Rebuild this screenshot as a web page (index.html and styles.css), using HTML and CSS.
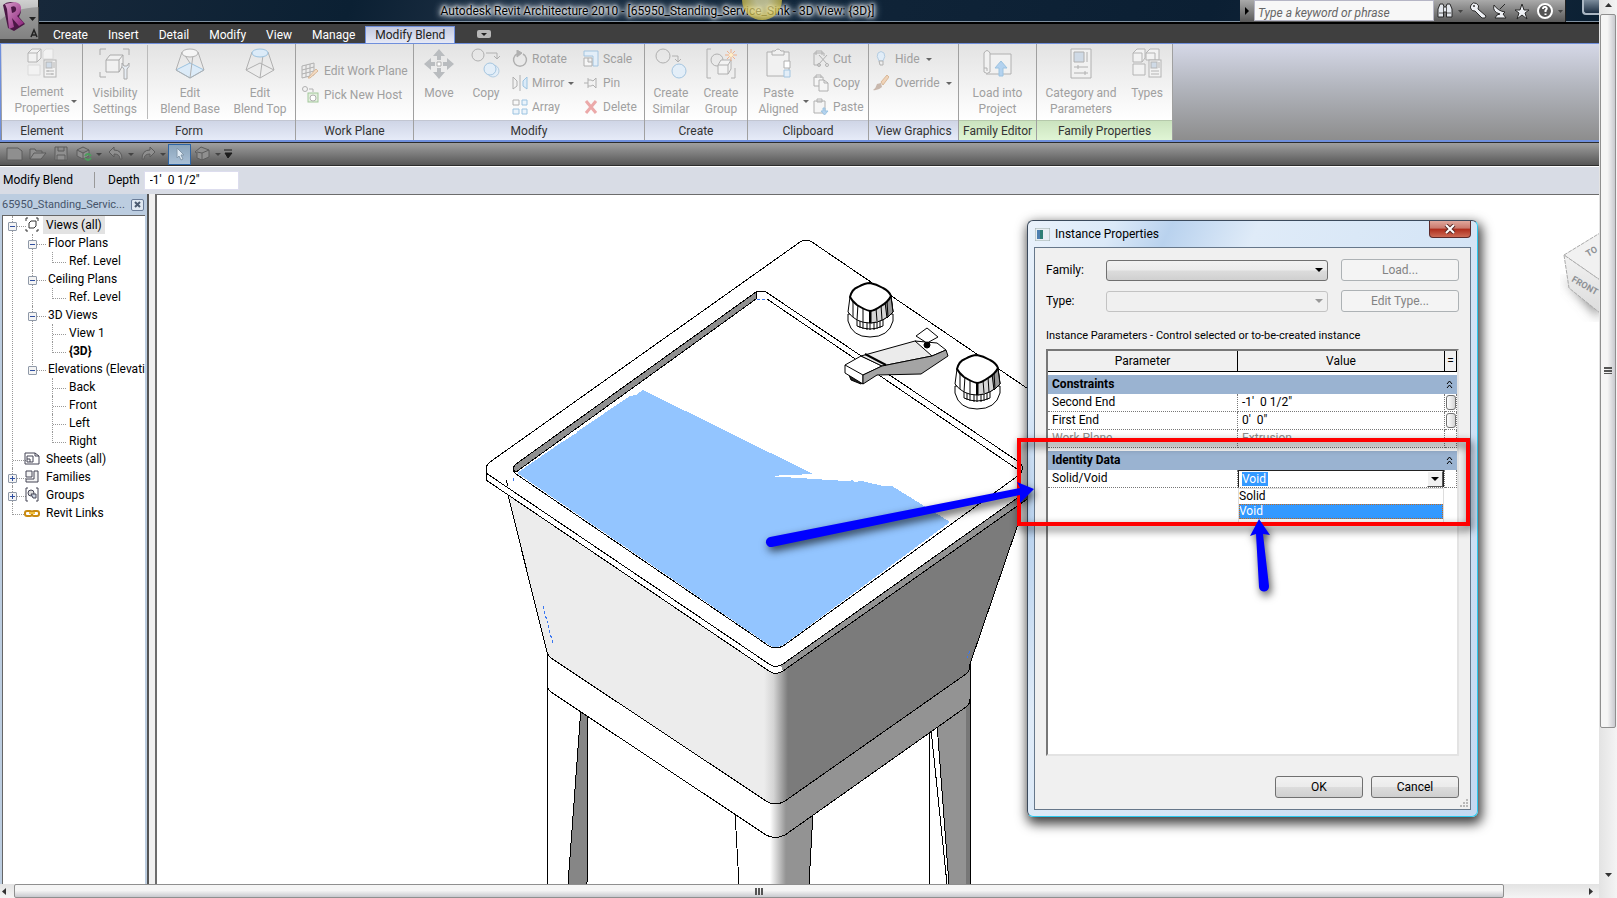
FILE: index.html
```html
<!DOCTYPE html>
<html lang="en">

<head>
    <meta charset="UTF-8">
    <meta name="viewport" content="width=device-width, initial-scale=1.0">
    <title>Autodesk Revit Architecture 2010</title>
    <link rel="stylesheet" href="styles.css">
</head>

<body>
    <div class="screen">
        <header class="top">
            <button class="app-menu" aria-label="Application menu">
                <svg width="39" height="39" viewBox="0 0 39 39">
                    <defs>
                        <linearGradient id="logoR" x1="0" y1="0" x2="1" y2="1">
                            <stop offset="0" stop-color="#d59ac8" />
                            <stop offset="1" stop-color="#8b1d78" />
                        </linearGradient>
                    </defs>
                    <path d="M0 20Q14 8 39 7V39H0z" fill="#777" opacity=".5" />
                    <path d="M3 5L8 28L14 31L25 24L19 17Q24 8 16 3Q8 0 3 5z" fill="#4b1745" />
                    <path d="M5 4L15 2Q22 3 21 10Q20 14 17 16L24 23L19 26L12 18L14 27L9 29L7 9zM11 7L12 13Q17 12 16 8Q15 5 11 7z" fill="url(#logoR)" fill-rule="evenodd" />
                    <path d="M29 17H36L32.500 21z" fill="#222" />
                    <path d="M31 37L34 30L37 37M32 35H36" fill="none" stroke="#222" stroke-width="1.500" />
                </svg>
            </button>

            <div class="titlebar">
                <h1 class="title">Autodesk Revit Architecture 2010 - [65950_Standing_Service_Sink - 3D View: {3D}]</h1>
                <div class="infocenter">
                    <button class="info-btn play" aria-label="Collapse">
                        <svg width="14" height="20" viewBox="0 0 14 20"><path d="M5 7L9 11L5 15z" fill="#000" /></svg>
                    </button>
                    <input class="search" type="text" placeholder="Type a keyword or phrase" aria-label="Search">
                    <button class="info-btn" aria-label="Find">
                        <svg width="34" height="20" viewBox="0 0 34 20"><path d="M4 17V9L6 4H9L10 7H12L13 4H16L18 9V17H12.500V12H9.500V17z" fill="#e4e8ee" stroke="#2a2a2a" /><path d="M5 13H9M13 13H17M9.500 7V12M12.500 7V12" stroke="#555" /><path d="M24 10H29L26.500 13z" fill="#444" /></svg>
                    </button>
                    <button class="info-btn" aria-label="Subscription Center">
                        <svg width="22" height="20" viewBox="0 0 22 20"><path d="M3 5A4 4 0 1 1 10 9L18 16L17 18H14L7 11A4 4 0 0 1 3 5z" fill="#eef0f4" stroke="#2a2a2a" /><circle cx="6" cy="6" r="1" fill="#333" /></svg>
                    </button>
                    <button class="info-btn" aria-label="Communication Center">
                        <svg width="22" height="20" viewBox="0 0 22 20"><path d="M4 5Q2 12 10 14L7 15L5 18H16L13 14L15 12Q8 11 4 5zM10 9L15 4" fill="#eef0f4" stroke="#2a2a2a" /></svg>
                    </button>
                    <button class="info-btn" aria-label="Favorites">
                        <svg width="22" height="20" viewBox="0 0 22 20"><path d="M10 4L12 10H17L13 13L15 19L10 15L5 19L7 13L3 10H8z" fill="#f0f2f6" stroke="#2a2a2a" /></svg>
                    </button>
                    <button class="info-btn" aria-label="Help">
                        <svg width="31" height="20" viewBox="0 0 31 20"><circle cx="11" cy="11" r="7" fill="#555" stroke="#fff" stroke-width="2" /><path d="M9 9Q9 6.500 11.500 7Q14 8 11.500 10.500V12M11.500 13.500V15" fill="none" stroke="#fff" stroke-width="2" /><path d="M24 10H29L26.500 13z" fill="#444" /></svg>
                    </button>
                </div>
                <button class="minimize" aria-label="Minimize"></button>
                <span class="cursor-halo"></span>
            </div>

            <nav class="tabs">
                <a href="#">Create</a>
                <a href="#">Insert</a>
                <a href="#">Detail</a>
                <a href="#">Modify</a>
                <a href="#">View</a>
                <a href="#">Manage</a>
                <a href="#" class="active">Modify Blend</a>
                <button class="tab-toggle" aria-label="Minimize ribbon">
                    <svg width="14" height="8" viewBox="0 0 14 8"><rect width="14" height="8" rx="2" fill="#b8b8b8" /><path d="M4 3H10L7 6z" fill="#222" /></svg>
                </button>
            </nav>
        </header>

        <div class="ribbon">
            <section class="panel element">
                <div class="tools">
                    <button class="tool" disabled>
                        <svg width="32" height="32" viewBox="0 0 32 32" fill="#f2f2f2" stroke="#b4b4b4"><path d="M2 5L6 1H15V10L11 14H2zM2 5H11V14M11 5L15 1" /><path d="M17 4L20 1H27V11H17zM2 17H14V27H2z" stroke="#dadada" /><rect x="18" y="12" width="12" height="17" /><rect x="20" y="14" width="6" height="6" fill="#cfdae6" /><path d="M28 14V20M20 23H28M20 26H28M22 22V24M26 25V27" /></svg>
                        <span>Element<br>Properties</span>
                    </button>
                    <i class="caret"></i>
                </div>
                <h2>Element</h2>
            </section>

            <section class="panel form">
                <div class="tools">
                    <button class="tool" disabled>
                        <svg width="32" height="32" viewBox="0 0 32 32" fill="none" stroke="#aaa"><path d="M1 7V1H7M24 1H30V7M1 24V29H7" /><path d="M7 12L11 7H24V17L20 24H7zM7 12H20V24M20 12L24 7" fill="#f1f1f1" /><path d="M23 15Q22 19 25 21V31H28V21Q31 19 30 15L28 18H25z" fill="#e7edf4" /></svg>
                        <span>Visibility<br>Settings</span>
                    </button>
                    <i class="divider"></i>
                    <button class="tool" disabled>
                        <svg width="32" height="32" viewBox="0 0 32 32" fill="none" stroke="#b0b0b0"><path d="M2 22L16 15L30 22L16 30z" fill="#dcebf8" stroke="#9cc3e0" /><path d="M8 4L2 22L16 30L30 22L24 4M19 7L16 30M10 6L16 15" /><ellipse cx="16" cy="5" rx="8" ry="4" fill="#f5f5f5" /></svg>
                        <span>Edit<br>Blend Base</span>
                    </button>
                    <button class="tool" disabled>
                        <svg width="32" height="32" viewBox="0 0 32 32" fill="none" stroke="#b0b0b0"><path d="M8 4L2 22L16 30L30 22L24 4M19 7L16 30M2 22L16 15L30 22" /><ellipse cx="16" cy="5" rx="8" ry="4" fill="#dcebf8" stroke="#9cc3e0" /></svg>
                        <span>Edit<br>Blend Top</span>
                    </button>
                </div>
                <h2>Form</h2>
            </section>

            <section class="panel workplane">
                <div class="tools">
                    <div class="stack">
                        <button class="mini" disabled>
                            <svg width="18" height="18" viewBox="0 0 18 18" fill="none" stroke="#b0b0b0"><path d="M1 4L13 1V13L1 16zM5 3V15M9 2V14M1 8L13 5M1 12L13 9" /><path d="M7 16L15 7L17 9L9 16z" fill="#f5dcc4" stroke="#d8b898" /></svg>
                            Edit Work Plane
                        </button>
                        <button class="mini" disabled>
                            <svg width="18" height="18" viewBox="0 0 18 18" fill="none" stroke="#b0b0b0"><circle cx="4" cy="3" r="2.500" /><path d="M8 3H12V6" /><rect x="7" y="7" width="10" height="9" fill="#e3f0de" stroke="#a3c79c" /><circle cx="12" cy="12" r="3" fill="#fff" /></svg>
                            Pick New Host
                        </button>
                    </div>
                </div>
                <h2>Work Plane</h2>
            </section>

            <section class="panel modify">
                <div class="tools">
                    <button class="tool" disabled>
                        <svg width="32" height="32" viewBox="0 0 32 32" fill="#b9bcbf"><path d="M16 1L22 8H18V12H14V8H10zM16 31L22 24H18V20H14V24H10zM1 16L8 10V14H12V18H8V22zM31 16L24 10V14H20V18H24V22z" /><path d="M14 14H18V18H14z" fill="#fff" stroke="#b0b0b0" /></svg>
                        <span>Move</span>
                    </button>
                    <button class="tool" disabled>
                        <svg width="32" height="32" viewBox="0 0 32 32" fill="none" stroke="#b0b0b0"><circle cx="8" cy="7" r="6" /><path d="M16 5H27V11M24 8L27 11L30 8" /><circle cx="23" cy="23" r="6" fill="#e3eef8" stroke="#b5cde2" /><circle cx="20" cy="21" r="6" fill="#e3eef8" stroke="#a4c5e0" /></svg>
                        <span>Copy</span>
                    </button>
                    <div class="stack">
                        <button class="mini" disabled>
                            <svg width="16" height="18" viewBox="0 0 16 18" fill="none" stroke="#b0b0b0"><path d="M5 4A6.500 6.500 0 1 0 11 4" stroke-width="1.500" /><path d="M5 0L10 3L5 7z" fill="#b0b0b0" /></svg>
                            Rotate
                        </button>
                        <button class="mini" disabled>
                            <svg width="16" height="18" viewBox="0 0 16 18" fill="none" stroke="#b0b0b0"><path d="M1 3L5 7V12L1 15zM8 1V17" /><path d="M15 3L11 7V12L15 15z" fill="#dcebf8" stroke="#9cc3e0" /></svg>
                            Mirror <i class="caret"></i>
                        </button>
                        <button class="mini" disabled>
                            <svg width="16" height="18" viewBox="0 0 16 18" fill="none" stroke="#9cc3e0"><path d="M1 2H7V7H1z" stroke="#b0b0b0" /><path d="M10 2H15V7H10zM1 11H7V16H1zM10 11H15V16H10z" fill="#eaf3fb" /></svg>
                            Array
                        </button>
                    </div>
                    <div class="stack">
                        <button class="mini" disabled>
                            <svg width="16" height="18" viewBox="0 0 16 18" fill="#e3eef8" stroke="#a4c5e0"><path d="M1 1H15V16H10V6H1z" /><path d="M1 8H9V16H1zM5 8V12H9" fill="#f6f6f6" stroke="#b0b0b0" /></svg>
                            Scale
                        </button>
                        <button class="mini" disabled>
                            <svg width="16" height="18" viewBox="0 0 16 18" fill="none" stroke="#b0b0b0"><path d="M1 9H5M5 4V14M5 6H8L10 7L13 4V14L10 11L8 12H5" /></svg>
                            Pin
                        </button>
                        <button class="mini" disabled>
                            <svg width="16" height="18" viewBox="0 0 16 18" stroke="#eba9a9" stroke-width="3"><path d="M3 3L13 15M13 3L3 15" /></svg>
                            Delete
                        </button>
                    </div>
                </div>
                <h2>Modify</h2>
            </section>

            <section class="panel create">
                <div class="tools">
                    <button class="tool" disabled>
                        <svg width="32" height="32" viewBox="0 0 32 32" fill="none" stroke="#b0b0b0"><circle cx="8" cy="8" r="7" /><path d="M17 8H23V14M20 11L23 14L26 11" /><circle cx="24" cy="23" r="7" fill="#e3eef8" stroke="#a4c5e0" /></svg>
                        <span>Create<br>Similar</span>
                    </button>
                    <button class="tool" disabled>
                        <svg width="32" height="32" viewBox="0 0 32 32" fill="none" stroke="#b0b0b0"><path d="M6 1H2V30H6M26 30H30V20" /><circle cx="12" cy="12" r="6" /><path d="M13 17L16 12H26V21L23 26H13zM13 17H23V26M23 17L26 12" fill="#f3f3f3" /><path d="M26 1V13M20 7H32M22 3L30 11M30 3L22 11" stroke="#efb18c" /><circle cx="26" cy="7" r="2" fill="#fff0c8" stroke="none" /></svg>
                        <span>Create<br>Group</span>
                    </button>
                </div>
                <h2>Create</h2>
            </section>

            <section class="panel clipboard">
                <div class="tools">
                    <button class="tool" disabled>
                        <svg width="32" height="32" viewBox="0 0 32 32" fill="#f1f1f1" stroke="#b0b0b0"><path d="M4 4H26V28H4z" /><path d="M9 7V3H12Q15 -1 18 3H21V7z" /><path d="M21 13H27V20H21z" fill="#fff" /><path d="M21 22H27V29H21z" fill="#e3eef8" stroke="#a4c5e0" /></svg>
                        <span>Paste<br>Aligned</span>
                    </button>
                    <i class="caret"></i>
                    <div class="stack">
                        <button class="mini" disabled>
                            <svg width="16" height="18" viewBox="0 0 16 18" fill="none" stroke="#b0b0b0"><path d="M7 15H1V3H11V6M3 5V1H9V5M6 5L14 14M14 5L6 14" /><circle cx="6" cy="15" r="1.500" /><circle cx="14" cy="15" r="1.500" /></svg>
                            Cut
                        </button>
                        <button class="mini" disabled>
                            <svg width="16" height="18" viewBox="0 0 16 18" fill="#f5f5f5" stroke="#b0b0b0"><path d="M1 12V3H10V12zM3 4V1H8V4" /><path d="M6 6H11L15 9V17H6zM11 6V9H15" /></svg>
                            Copy
                        </button>
                        <button class="mini" disabled>
                            <svg width="16" height="18" viewBox="0 0 16 18" fill="#f5f5f5" stroke="#b0b0b0"><path d="M1 3H12V15H1zM4 4V1H9V4z" /><path d="M12 10V13H15L11.500 17L8 13H10V10z" fill="#b3d2ef" stroke="#9cc3e0" /></svg>
                            Paste
                        </button>
                    </div>
                </div>
                <h2>Clipboard</h2>
            </section>

            <section class="panel graphics">
                <div class="tools">
                    <div class="stack">
                        <button class="mini" disabled>
                            <svg width="16" height="18" viewBox="0 0 16 18" fill="#e1edf8" stroke="#b5cde2"><path d="M6 11Q3 6 5 3Q8 0 11 3Q13 6 10 11z" /><path d="M6 11H10V15H7z" fill="#eee" stroke="#b0b0b0" /></svg>
                            Hide <i class="caret"></i>
                        </button>
                        <button class="mini" disabled>
                            <svg width="16" height="18" viewBox="0 0 16 18"><path d="M0 16Q3 14 4 10L8 9L9 13Q5 17 0 16z" fill="#c9b8ad" /><path d="M8 8L14 1L16 3L10 11z" fill="#f0d3b8" stroke="#d8b898" /></svg>
                            Override <i class="caret"></i>
                        </button>
                    </div>
                </div>
                <h2>View Graphics</h2>
            </section>

            <section class="panel editor family">
                <div class="tools">
                    <button class="tool" disabled>
                        <svg width="32" height="32" viewBox="0 0 32 32" fill="#f1f1f1" stroke="#b0b0b0"><path d="M8 6H29V26H4" /><path d="M2 20V5Q5 0 8 5V24Q5 27 2 24V20H5V23" /><path d="M19 13L25 20H21V28H17V20H13z" fill="#b3d2ef" stroke="#9cc3e0" /></svg>
                        <span>Load into<br>Project</span>
                    </button>
                </div>
                <h2>Family Editor</h2>
            </section>

            <section class="panel properties family">
                <div class="tools">
                    <button class="tool" disabled>
                        <svg width="32" height="32" viewBox="0 0 32 32" fill="#f1f1f1" stroke="#b0b0b0"><path d="M6 1H26V30H6z" /><path d="M9 4H19V14H9z" fill="#cfdae6" /><path d="M22 4V14M9 19H23M9 25H23M13 17V21M20 23V27" /></svg>
                        <span>Category and<br>Parameters</span>
                    </button>
                    <button class="tool" disabled>
                        <svg width="32" height="32" viewBox="0 0 32 32" fill="#f2f2f2" stroke="#b4b4b4"><path d="M2 5L6 1H14V10L11 14H2zM2 5H11V14M15 5L19 1H28V12H15zM15 5H24V12M2 16H14V27H2z" /><rect x="18" y="12" width="12" height="17" /><rect x="20" y="14" width="6" height="6" fill="#cfdae6" /><path d="M28 14V20M20 23H28M20 26H28" /></svg>
                        <span>Types</span>
                    </button>
                </div>
                <h2>Family Properties</h2>
            </section>
        </div>

        <div class="quick-access">
            <button aria-label="New"><svg width="18" height="16" viewBox="0 0 18 16"><path d="M1 2H12L16 5V14H1z" /></svg></button>
            <button aria-label="Open"><svg width="18" height="16" viewBox="0 0 18 16"><path d="M1 13V3H6L7 5H13V7M1 13L5 7H17L12 13z" /></svg></button>
            <button aria-label="Save"><svg width="18" height="16" viewBox="0 0 18 16"><path d="M3 1H15V14H3zM6 1V5H12V1M5 14V9H13V14" /></svg></button>
            <button aria-label="Synchronize"><svg width="18" height="16" viewBox="0 0 18 16"><path d="M2 4L8 1L14 4V10L8 13L2 10zM2 4L8 7L14 4M8 7V13" /><path d="M10 10Q13 6 16 10M16 12Q13 16 10 12" stroke="#4c9c5c" fill="none" stroke-width="2" /></svg></button>
            <i class="caret"></i>
            <button aria-label="Undo"><svg width="18" height="16" viewBox="0 0 18 16"><path d="M2 6L7 1V4Q15 4 15 13H13Q13 8 7 8V11z" /></svg></button>
            <i class="caret"></i>
            <button aria-label="Redo"><svg width="18" height="16" viewBox="0 0 18 16"><path d="M16 6L11 1V4Q3 4 3 13H5Q5 8 11 8V11z" /></svg></button>
            <i class="caret"></i>
            <button class="on" aria-label="Select"><svg width="18" height="16" viewBox="0 0 18 16"><path d="M6 2V12L8 10L10 14L12 13L10 9H13z" fill="#dfeaf4" stroke="#8498aa" /></svg></button>
            <button aria-label="3D view"><svg width="18" height="16" viewBox="0 0 18 16"><path d="M1 6L7 1L15 4V11L8 14L3 12V7zM8 7L15 4M8 7V14M3 6L8 7" /></svg></button>
            <i class="caret"></i>
            <svg width="10" height="10" viewBox="0 0 10 10"><path d="M1 1H9M2 4H9L5 9z" fill="#1c1c1c" stroke="#1c1c1c" /></svg>
        </div>

        <div class="options">
            <span class="mode">Modify Blend</span>
            <label for="depth">Depth</label>
            <input type="text" id="depth" value="-1'  0 1/2&quot;">
        </div>

        <div class="workspace">
            <aside class="browser">
                <div class="browser-head">
                    <span>65950_Standing_Servic...</span>
                    <button class="close-pane" aria-label="Close">
                        <svg width="7" height="7" viewBox="0 0 7 7" stroke="#4a5a70" stroke-width="2"><path d="M1 1L6 6M6 1L1 6" /></svg>
                    </button>
                </div>
                <ul class="tree">
                    <li>
                        <div class="row"><button class="toggle" aria-label="Collapse"></button>
                            <svg width="16" height="16" viewBox="0 0 16 16" fill="none" stroke="#333"><path d="M4 1H2V4M12 1H14V4M2 12V14H4M14 12V14H12M5 6L7 4H12V9L10 11H5z" /></svg>
                            <span class="selected">Views (all)</span></div>
                        <ul>
                            <li>
                                <div class="row"><button class="toggle" aria-label="Collapse"></button>Floor Plans</div>
                                <ul>
                                    <li><div class="row">Ref. Level</div></li>
                                </ul>
                            </li>
                            <li>
                                <div class="row"><button class="toggle" aria-label="Collapse"></button>Ceiling Plans</div>
                                <ul>
                                    <li><div class="row">Ref. Level</div></li>
                                </ul>
                            </li>
                            <li>
                                <div class="row"><button class="toggle" aria-label="Collapse"></button>3D Views</div>
                                <ul>
                                    <li><div class="row">View 1</div></li>
                                    <li><div class="row"><b>{3D}</b></div></li>
                                </ul>
                            </li>
                            <li>
                                <div class="row"><button class="toggle" aria-label="Collapse"></button>Elevations (Elevati</div>
                                <ul>
                                    <li><div class="row">Back</div></li>
                                    <li><div class="row">Front</div></li>
                                    <li><div class="row">Left</div></li>
                                    <li><div class="row">Right</div></li>
                                </ul>
                            </li>
                        </ul>
                    </li>
                    <li>
                        <div class="row leaf">
                            <svg width="16" height="16" viewBox="0 0 16 16" fill="none" stroke="#445"><path d="M1 2H11L15 5V13H1zM11 2V5H15M3 5H9V11H3zM3 8H6V11" /></svg>
                            <span>Sheets (all)</span></div>
                    </li>
                    <li>
                        <div class="row"><button class="toggle plus" aria-label="Expand"></button>
                            <svg width="16" height="16" viewBox="0 0 16 16" fill="#f4f4f4" stroke="#445"><path d="M2 2H8V8H2zM10 2H14V13H2V10H10z" /></svg>
                            <span>Families</span></div>
                    </li>
                    <li>
                        <div class="row"><button class="toggle plus" aria-label="Expand"></button>
                            <svg width="16" height="16" viewBox="0 0 16 16" fill="none" stroke="#445"><path d="M4 1H2V14H4M12 1H14V14H12" /><circle cx="7" cy="6" r="3" fill="#ddd" /><path d="M7 7H12V11H9z" fill="#cdd6e2" /></svg>
                            <span>Groups</span></div>
                    </li>
                    <li>
                        <div class="row leaf">
                            <svg width="16" height="16" viewBox="0 0 16 16" fill="none" stroke="#c98a10" stroke-width="2"><rect x="1" y="6" width="7" height="5" rx="2" /><rect x="8" y="6" width="7" height="5" rx="2" /><path d="M5 8H11" stroke="#f0c040" /></svg>
                            <span>Revit Links</span></div>
                    </li>
                </ul>
            </aside>

            <main class="canvas">
                <svg class="scene" width="1443" height="689" viewBox="157 195 1443 689">
                    <defs>
                        <linearGradient id="corner" gradientUnits="userSpaceOnUse" x1="764" y1="0" x2="788" y2="0">
                            <stop offset="0" stop-color="#ececec" />
                            <stop offset=".4" stop-color="#d4d4d4" />
                            <stop offset="1" stop-color="#7b7b7b" />
                        </linearGradient>
                        <linearGradient id="deck" gradientUnits="userSpaceOnUse" x1="770" y1="0" x2="786" y2="0">
                            <stop offset="0" stop-color="#fff" />
                            <stop offset="1" stop-color="#939393" />
                        </linearGradient>
                        <linearGradient id="cube" x1="0" y1="0" x2="0" y2="1">
                            <stop offset="0" stop-color="#f2f2f2" />
                            <stop offset="1" stop-color="#dcdcdc" />
                        </linearGradient>
                        <filter id="soft"><feGaussianBlur stdDeviation="6" /></filter>
                    </defs>

                    <g fill="#fff" stroke="#000" stroke-linejoin="round" shape-rendering="crispEdges">
                        <!-- legs -->
                        <path d="M548 680V884H588V714L570 702z" stroke="none" />
                        <path d="M581 708L568 884H587L588 712z" fill="#868686" />
                        <path d="M547 652V884" />
                        <path d="M735 812L739 884H809L813 812z" fill="url(#deck)" />
                        <path d="M937 724L949 884H970V690z" fill="#939393" />
                        <path d="M966 690H970V884H966z" fill="#777" stroke="none" />
                        <path d="M929 730V884M931 729L947 884M937 724L949 884M970 664V884" fill="none" />
                        <!-- deck -->
                        <path d="M547 652V686Q548 690 551 692L766 835Q775 840 785 835L966 707Q970 704 970 699V664L785 770H766z" fill="url(#deck)" />
                        <!-- bowl -->
                        <path d="M508 495L547 652Q548 656 551 658L766 801Q775 807 785 801L966 674Q970 671 970 664L1017 527V490L775 650z" fill="url(#corner)" />
                        <!-- rim -->
                        <path d="M486 468V480L769 671Q775 676 783 671L1040 490V478L775 655z" fill="#fff" />
                        <path d="M781 665L1040 482V490L783 671z" fill="#939393" stroke="none" />
                        <path d="M486 473L769 664Q775 669 783 664L1040 482M783 671L1040 490" fill="none" />
                        <path d="M486 473V467Q487 465 490 462L800 242Q806 238 812 242L1040 397V482L783 664Q775 669 769 664z" />
                        <!-- basin -->
                        <path d="M513 469Q513 467 516 464L756 292Q761 290 766 292L1019 462Q1026 468 1019 475L786 644Q775 652 766 644L516 474Q513 471 513 469z" />
                        <path d="M513 469Q513 467 516 464L756 292V299L516 472z" fill="#8f8f8f" />
                        <path d="M767 299L1020 471" />
                        <path d="M508 486L506 480" />
                    </g>
                    <g shape-rendering="crispEdges">
                        <path d="M517 473L578 431L630 396L636 395L643 390L813 474L767 476L862 481L883 486H892L950 522L786 643Q775 651 766 643z" fill="#93c5ff" />
                        <path d="M556 446L578 432L572 432zM767 476L812 475L862 482z" fill="#fff" />
                        <path d="M757 299H767M513 478V481M543 606L553 644M970 651L967 658" stroke="#3b77f0" stroke-dasharray="3 2" fill="none" />
                        <path d="M1019 475L786 644Q775 652 766 644L516 474" stroke="#000" fill="none" />
                    </g>

                    <!-- faucet -->
                    <g fill="#fff" stroke="#000" stroke-linejoin="round">
                        <path d="M849 375L851 380L861 384L866 380z" fill="#222" />
                        <path d="M845 365L861 356L882 366L863 375V384L845 373z" />
                        <path d="M861 356L915 341L945 350L932 356L882 366z" fill="#ebebeb" />
                        <path d="M915 341L937 343L946 350L932 356z" />
                        <path d="M863 375L882 366L932 356L946 350L948 356L921 374L877 375L863 384z" fill="#a4a4a4" />
                        <path d="M865 354L886 365" stroke-width="2" />
                        <path d="M916 336L927 328L938 337L927 343z" />
                        <circle cx="927" cy="345" r="3" fill="#000" />
                        <path d="M845 365L863 375" />
                    </g>
                    <!-- knobs -->
                    <g id="knob" fill="#fff" stroke="#000" stroke-linejoin="round">
                        <path d="M848 314V321Q852 337 870 337Q889 337 893 321V314z" />
                        <path d="M857 318V326Q870 332 883 326V318z" />
                        <path d="M860 320V328M863 320V329M867 320V330M870 320V330M874 320V330M877 320V329M880 320V328" />
                        <path d="M850 297L848 312Q856 323 870 323Q884 322 893 312L891 296L870 311z" />
                        <path d="M871 311L891 297L893 312Q884 322 871 323z" fill="#d6d6d6" />
                        <path d="M885 302L891 297L893 312L887 318z" fill="#999" />
                        <path d="M853 300V317M858 304L857 320M863 307V322M870 311V323M876 308L877 321M881 305L882 320M887 301L888 317" fill="none" />
                        <path d="M870 310V323" stroke-width="2" />
                        <path d="M850 297Q852 289 858 287Q865 283 870 283Q876 284 883 288Q889 291 891 296Q888 302 881 306Q874 311 870 311Q865 310 857 305Q852 301 850 297z" stroke-width="2" />
                    </g>
                    <use href="#knob" x="107" y="72" />

                    <!-- view cube -->
                    <path d="M1564 278L1600 318V296z" fill="#777" filter="url(#soft)" />
                    <path d="M1564 255L1600 233V280z" fill="#f1f1f1" stroke="#aaa" stroke-dasharray="4 1" />
                    <path d="M1564 255L1569 288L1600 313V280z" fill="url(#cube)" stroke="#aaa" stroke-dasharray="4 1" />
                    <text class="cube-label" transform="translate(1571 281) rotate(30)">FRONT</text>
                    <text class="cube-label" transform="translate(1588 257) rotate(-30)">TO</text>
                </svg>

                <form class="dialog">
                    <div class="dialog-title">
                        <svg width="15" height="13" viewBox="0 0 15 13"><path d="M0 0H15V13H0z" fill="#e8eef2" stroke="#9aa" /><path d="M2 2H8V11H2z" fill="#2f7f74" /><path d="M2 2H5V11H2z" fill="#4d7fb0" /></svg>
                        <h3>Instance Properties</h3>
                        <button type="button" class="close" aria-label="Close">
                            <svg width="12" height="10" viewBox="0 0 12 10"><path d="M2 1L10 9M10 1L2 9" stroke="#5b2a26" stroke-width="4" /><path d="M2 1L10 9M10 1L2 9" stroke="#fff" stroke-width="2" /></svg>
                        </button>
                    </div>
                    <div class="dialog-body">
                        <div class="field">
                            <label for="family">Family:</label>
                            <select id="family"></select>
                            <button type="button" disabled>Load...</button>
                        </div>
                        <div class="field">
                            <label for="type">Type:</label>
                            <select id="type" disabled></select>
                            <button type="button" disabled>Edit Type...</button>
                        </div>
                        <p class="caption">Instance Parameters - Control selected or to-be-created instance</p>
                        <div class="grid-box">
                            <table>
                                <colgroup>
                                    <col class="col-name">
                                    <col>
                                    <col class="col-eq">
                                </colgroup>
                                <thead>
                                    <tr><th>Parameter</th><th>Value</th><th>=</th></tr>
                                </thead>
                                <tbody>
                                    <tr class="group"><th colspan="2">Constraints</th><td><svg width="7" height="9" viewBox="0 0 7 9" fill="none" stroke="#000"><path d="M1 4L3.500 1L6 4M1 8L3.500 5L6 8" /></svg></td></tr>
                                    <tr><td>Second End</td><td>-1'&nbsp; 0 1/2"</td><td class="eq"><button type="button" aria-label="Associate"></button></td></tr>
                                    <tr><td>First End</td><td>0'&nbsp; 0"</td><td class="eq"><button type="button" aria-label="Associate"></button></td></tr>
                                    <tr class="dim"><td>Work Plane</td><td>Extrusion</td><td></td></tr>
                                </tbody>
                                <tbody>
                                    <tr class="group"><th colspan="2">Identity Data</th><td><svg width="7" height="9" viewBox="0 0 7 9" fill="none" stroke="#000"><path d="M1 4L3.500 1L6 4M1 8L3.500 5L6 8" /></svg></td></tr>
                                    <tr>
                                        <td><label for="solidVoid">Solid/Void</label></td>
                                        <td class="combo">
                                            <div class="combo-box">
                                                <input type="text" id="solidVoid" value="Void">
                                                <button type="button" aria-label="Open list"><i class="caret"></i></button>
                                            </div>
                                            <ul class="combo-list">
                                                <li>Solid</li>
                                                <li class="current">Void</li>
                                            </ul>
                                        </td>
                                        <td></td>
                                    </tr>
                                </tbody>
                            </table>
                        </div>
                        <div class="dialog-actions">
                            <button type="submit">OK</button>
                            <button type="button">Cancel</button>
                        </div>
                        <svg class="grip" width="8" height="8" viewBox="0 0 8 8" fill="#b8b8b8"><path d="M6 0H8V2H6zM3 3H5V5H3zM6 3H8V5H6zM0 6H2V8H0zM3 6H5V8H3zM6 6H8V8H6z" /></svg>
                    </div>
                </form>

                <!-- callouts drawn over the dialog -->
                <svg class="marks" width="1443" height="689" viewBox="157 195 1443 689">
                    <rect x="1019" y="440" width="449" height="84" fill="none" stroke="#f00" stroke-width="4" />
                    <g fill="#00f">
                        <path d="M770 537L1020 488L1017 482L1034 489L1020 503L1020 495L772 547A5 5 0 0 1 770 537z" />
                        <path d="M1259 519L1270 535L1263 534L1269 586A5 5 0 0 1 1259 587L1256 534L1250 536z" />
                    </g>
                </svg>
            </main>
        </div>
    </div>

    <div class="scroll-v">
        <svg width="16" height="14" viewBox="0 0 16 14"><path d="M5 7H12L8.500 3z" fill="#333" /></svg>
        <div class="thumb"><i></i></div>
        <svg width="16" height="16" viewBox="0 0 16 16"><path d="M5 5H12L8.500 9z" fill="#333" /></svg>
    </div>
    <div class="scroll-h">
        <svg width="14" height="14" viewBox="0 0 14 14"><path d="M6 4V11L2 7.500z" fill="#333" /></svg>
        <div class="thumb"><i></i></div>
        <svg width="18" height="14" viewBox="0 0 18 14"><path d="M8 4V11L12 7.500z" fill="#333" /></svg>
    </div>
</body>

</html>
```
FILE: styles.css
```css
* {
    box-sizing: border-box;
}

body {
    margin: 0;
    height: 100vh;
    display: grid;
    grid-template-columns: 1fr 18px;
    grid-template-rows: 1fr 14px;
    overflow: hidden;
    background: #f0f0f0;
    color: #000;
    font-family: Roboto, "Open Sans", sans-serif;
    font-size: 12px;
    line-height: 16px;
}

button,
input,
select {
    font: inherit;
    color: inherit;
    margin: 0;
    padding: 0;
}

button {
    border: 0;
    background: none;
}

h1,
h2,
h3,
p,
ul {
    margin: 0;
    padding: 0;
    font-size: 12px;
    font-weight: normal;
    list-style: none;
}

svg {
    display: block;
    flex: none;
}

.caret {
    display: inline-block;
    border: 3px solid transparent;
    border-top: 3px solid #666;
    border-bottom: 0;
}

.screen {
    min-width: 0;
    min-height: 0;
    display: flex;
    flex-direction: column;
    overflow: hidden;
    background: #d8dce5;
}

/* title bar and tabs */
.top {
    display: grid;
    grid-template-columns: 39px 1fr;
    grid-template-rows: 24px 19px;
    background: #3f3f3f;
}

.app-menu {
    grid-row: 1 / 3;
    height: 39px;
    background: linear-gradient(#d0d0d0, #8a8a8a);
    border-right: 1px solid #222;
}

.titlebar {
    position: relative;
    display: flex;
    overflow: hidden;
    background: linear-gradient(110deg, #17283a 0, #0b2033 20%, #223347 32%, #12263a 40%, #0b1f33 75%, #16283c 90%, #0b2033 100%);
    border-bottom: 2px solid #000;
    box-shadow: inset 0 -1px 0 #7f90a0;
}

.title {
    flex: 1;
    padding: 3px 0 0 36px;
    text-align: center;
    white-space: nowrap;
    text-shadow: 0 0 3px #fff, 0 0 4px #fff, 0 0 6px #dfe6ee, 0 0 8px #c5d0da, 0 0 10px #a9b6c2;
}

.infocenter {
    display: flex;
    height: 22px;
    background: linear-gradient(#aaa, #585858);
    border-right: 1px solid #222;
}

.info-btn {
    display: flex;
}

.search {
    width: 180px;
    height: 21px;
    padding: 4px 3px 0;
    background: #f7f7f7;
    border: 1px solid #b5b5c5;
    font-style: italic;
}

.search::placeholder {
    color: #666;
}

.minimize {
    width: 17px;
    height: 15px;
    margin-left: 16px;
    background: linear-gradient(#7c8c9c, #1c2e42);
    border: 1px solid #aab6c2;
    border-width: 0 0 2px 2px;
    border-radius: 0 0 0 4px;
}

.cursor-halo {
    position: absolute;
    left: 703px;
    top: -20px;
    width: 40px;
    height: 40px;
    border-radius: 50%;
    background: radial-gradient(circle, #fbf3b0 20%, #d9c33c 75%);
    opacity: .7;
}

.tabs {
    display: flex;
    padding-left: 4px;
    color: #fff;
}

.tabs a {
    margin-top: 2px;
    padding: 1px 10px 0;
    color: inherit;
    text-decoration: none;
}

.tabs .active {
    background: linear-gradient(#c3c9df, #e6e9f6);
    border: 1px solid #6f8fdc;
    border-bottom: 0;
    padding: 0 9px;
    color: #222;
}

.tab-toggle {
    margin-left: 22px;
}

/* ribbon */
.ribbon {
    display: flex;
    flex: none;
    height: 99px;
    padding-left: 1px;
    background: linear-gradient(#d5d8e7, #b2b5bd 45%, #8d8d8d);
    border: 1px solid #6f8fdc;
    border-right: 0;
    border-bottom-width: 2px;
}

.panel {
    display: flex;
    flex-direction: column;
    flex: none;
    border-right: 1px solid #a0a0a0;
    color: #a0a0a0;
    white-space: nowrap;
}

.tools {
    flex: 1;
    display: grid;
    position: relative;
    background: linear-gradient(#e3e3e3, #fff);
}

.panel h2 {
    height: 20px;
    padding-top: 2px;
    text-align: center;
    color: #333;
    background: linear-gradient(#cfd5e6, #e6ebf8);
    border-top: 1px solid #c2c6d2;
}

.family h2 {
    background: linear-gradient(#cbe3bf, #e0f5d5);
    border-color: #b5c9ab;
}

.element { width: 81px; }
.form { width: 213px; }
.workplane { width: 118px; }
.modify { width: 231px; }
.create { width: 103px; }
.clipboard { width: 121px; }
.graphics { width: 90px; }
.editor { width: 78px; }
.properties { width: 136px; }

.form .tools { grid-template-columns: 64px 1px 84px 56px; }
.modify .tools { grid-template-columns: 50px 44px 71px 1fr; }
.create .tools { grid-template-columns: 52px 48px; }
.clipboard .tools { grid-template-columns: 61px 1fr; }
.properties .tools { grid-template-columns: 88px 44px; }

.tool {
    display: flex;
    flex-direction: column;
    align-items: center;
    padding-top: 4px;
    line-height: 16px;
    text-align: center;
}

.tool:disabled,
.mini:disabled {
    color: #a0a0a0;
}

.tool span {
    padding-top: 5px;
}

.element .tool span {
    padding-top: 4px;
}

.tools > .caret {
    position: absolute;
    left: 69px;
    top: 56px;
}

.clipboard .tools > .caret {
    left: 55px;
}

.divider {
    background: #bbb;
    margin: 1px 0;
}

.stack {
    display: flex;
    flex-direction: column;
    padding: 3px 0 0 4px;
}

.workplane .stack {
    padding: 15px 0 0 5px;
}

.mini {
    display: flex;
    align-items: center;
    gap: 5px;
    height: 24px;
}

.modify .mini,
.clipboard .mini {
    gap: 4px;
}

.graphics .mini {
    gap: 6px;
}

/* quick access */
.quick-access {
    display: flex;
    flex: none;
    align-items: center;
    height: 24px;
    padding-left: 3px;
    background: linear-gradient(#a0a0a0, #565656);
    border: solid #2c2c2c;
    border-width: 1px 0;
}

.quick-access button {
    display: flex;
    justify-content: center;
    align-items: center;
    width: 23px;
    height: 21px;
}

.quick-access button svg {
    fill: #8f8f8f;
    stroke: #5c5c5c;
}

.quick-access .caret {
    border-top-color: #444;
    margin: 0 2px 0 1px;
}

.quick-access .on {
    background: linear-gradient(#8ba4bb, #a9c0d6);
    border: 1px solid #2d64a4;
}

/* options bar */
.options {
    display: flex;
    flex: none;
    align-items: center;
    height: 28px;
    padding: 0 3px 1px;
    border-top: 1px solid #fff;
}

.mode {
    width: 92px;
    border-right: 1px solid #999;
    margin-right: 13px;
}

.options input {
    width: 95px;
    height: 19px;
    margin-left: 4px;
    padding: 0 5px;
    background: #fff;
    border: 1px solid #dde;
    white-space: pre;
}

/* project browser */
.workspace {
    flex: 1;
    min-height: 0;
    display: flex;
}

.browser {
    flex: none;
    width: 155px;
    display: flex;
    flex-direction: column;
    padding-left: 2px;
    background: linear-gradient(90deg, #bccde0 147px, #555 147px, #555 149px, #f0f0f0 149px);
}

.browser-head {
    display: flex;
    align-items: center;
    height: 21px;
    color: #46546a;
    font-size: 11px;
    white-space: nowrap;
}

.browser-head span {
    width: 129px;
}

.close-pane {
    display: flex;
    align-items: center;
    justify-content: center;
    width: 13px;
    height: 12px;
    border: 1px solid #6a7c98;
    border-radius: 2px;
    background: #dfe8f2;
}

.tree {
    flex: 1;
    width: 143px;
    padding-left: 5px;
    background: #fff;
    border: solid #666;
    border-width: 1px 0 0 1px;
    overflow: hidden;
    white-space: nowrap;
}

.tree ul {
    margin-left: 20px;
}

.tree li {
    position: relative;
}

.tree li::before {
    content: "";
    position: absolute;
    left: 4px;
    top: 0;
    bottom: 0;
    border-left: 1px dotted #999;
}

.tree li:last-child::before {
    bottom: auto;
    height: 11px;
}

.row {
    position: relative;
    display: flex;
    align-items: center;
    height: 18px;
    padding-left: 21px;
}

.row::before {
    content: "";
    position: absolute;
    left: 5px;
    top: 10px;
    width: 13px;
    border-top: 1px dotted #999;
}

.row svg {
    position: relative;
    margin-right: 3px;
}

.row span {
    padding: 1px 3px;
}

.row .selected {
    background: #e2e2e2;
}

.tree > li > .row {
    padding-left: 16px;
}

.toggle {
    position: relative;
    flex: none;
    width: 9px;
    height: 9px;
    margin: 3px 11px 0 -21px;
    border: 1px solid #8f99a8;
    border-radius: 1px;
    background: linear-gradient(#2f4fa0, #2f4fa0) center / 5px 1px no-repeat, #f4f4f4;
}

.toggle.plus {
    background: linear-gradient(#2f4fa0, #2f4fa0) center / 5px 1px no-repeat,
        linear-gradient(#2f4fa0, #2f4fa0) center / 1px 5px no-repeat, #f4f4f4;
}

.tree > li > .row .toggle {
    margin: 3px 7px 0 -16px;
}

/* drawing area */
.canvas {
    flex: 1;
    position: relative;
    overflow: hidden;
    background: #fff;
    border: solid #6c6c6c;
    border-width: 1px 0 0 2px;
}

.marks {
    position: absolute;
    left: 0;
    top: 0;
    pointer-events: none;
    filter: drop-shadow(2px 4px 4px rgba(0, 0, 0, .7));
}

.cube-label {
    font-size: 9px;
    font-weight: bold;
    fill: #8f9296;
}

/* instance properties dialog */
.dialog {
    position: absolute;
    left: 870px;
    top: 25px;
    width: 451px;
    padding: 0 6px 6px;
    background: linear-gradient(115deg, #eaf2fb 0, #dbe9f8 12%, #b9d2ee 20%, #dfebf8 32%, #d5e5f6 60%, #c3d9f2 100%);
    border: 1px solid #3b4a5c;
    border-right-color: #2cc8ee;
    border-bottom-color: #2cc8ee;
    border-radius: 6px;
    box-shadow: 2px 5px 12px 2px rgba(0, 0, 0, .75);
}

.dialog-title {
    display: flex;
    height: 26px;
    padding-left: 1px;
}

.dialog-title > svg {
    margin-top: 7px;
}

.dialog-title h3 {
    flex: 1;
    padding: 5px 0 0 5px;
}

.close {
    display: flex;
    justify-content: center;
    align-items: center;
    width: 42px;
    height: 17px;
    background: linear-gradient(#e0a79c 0, #c9796c 45%, #ae2c1b 50%, #cc6a55);
    border: 1px solid #5c2a2a;
    border-top: 0;
    border-radius: 0 0 4px 4px;
}

.dialog-body {
    position: relative;
    padding: 11px;
    background: #f0f0f0;
    border: 1px solid #66778a;
}

.field {
    position: relative;
    display: grid;
    grid-template-columns: 60px 222px 1fr;
    align-items: center;
    height: 22px;
    margin-bottom: 9px;
}

.field select {
    height: 21px;
    appearance: none;
    background: linear-gradient(#f2f2f2, #ebebeb 48%, #dcdcdc 52%, #d0d0d0);
    border: 1px solid #707070;
    border-radius: 3px;
}

.field::after {
    content: "";
    position: absolute;
    left: 269px;
    top: 9px;
    border: 4px solid transparent;
    border-top-color: #000;
    border-bottom: 0;
}

.field:nth-child(2)::after {
    border-top-color: #999;
}

.field select:disabled {
    background: #f0f0f0;
    border-color: #b0b0b0;
}

.field button,
.dialog-actions button {
    height: 22px;
    background: linear-gradient(#f2f2f2, #ebebeb 48%, #dcdcdc 52%, #cfcfcf);
    border: 1px solid #707070;
    border-radius: 3px;
}

.field button {
    width: 118px;
    justify-self: end;
}

.field button:disabled {
    background: #f4f4f4;
    border-color: #adb2b5;
    color: #838383;
}

.caption {
    margin-top: 16px;
    font-size: 11px;
    white-space: nowrap;
}

.grid-box {
    height: 407px;
    margin-top: 5px;
    background: #fff;
    border: 2px solid #777;
    border-color: #777 #e3e3e3 #e3e3e3 #777;
}

table {
    width: 100%;
    table-layout: fixed;
    border-collapse: separate;
    border-spacing: 0;
}

.col-name {
    width: 190px;
}

.col-eq {
    width: 12px;
}

thead th {
    height: 21px;
    padding: 0;
    background: #f0f0f0;
    border-right: 1px solid #000;
    border-bottom: 1px solid #000;
    font-weight: normal;
}

tbody::before {
    content: "";
    display: table-row;
    height: 3px;
}

tbody td,
.group th {
    height: 18px;
    padding: 0 4px;
    line-height: 17px;
    border-right: 1px dotted #777;
    border-bottom: 1px dotted #777;
    text-align: left;
}

.group th,
.group td {
    height: 19px;
    padding-right: 0;
    background: #9ab3d1;
    border: 0;
}

.group td {
    padding: 0 1px;
}

.dim td {
    color: #8c8c8c;
}

tbody .eq {
    padding: 0 0 0 1px;
}

.eq button {
    display: block;
    width: 10px;
    height: 15px;
    background: linear-gradient(90deg, #fff, #d5d5d5);
    border: 1px solid #707070;
    border-radius: 3px;
}

tbody .combo {
    position: relative;
    padding: 0;
}

.combo-box {
    display: flex;
    align-items: center;
    height: 17px;
    padding-left: 3px;
    background: #fff;
    border: 1px solid #222;
    border-bottom: 0;
}

.combo-box input {
    width: 26px;
    height: 14px;
    margin-right: auto;
    background: #3399ff;
    border: 0;
    color: #fff;
}

.combo-box button {
    display: flex;
    align-items: center;
    justify-content: center;
    width: 16px;
    height: 16px;
    background: #f0f0f0;
    border: 1px solid #555;
    border-color: #fff #555 #555 #fff;
}

.combo-box .caret {
    border-width: 4px 4px 0;
    border-top-color: #000;
}

.combo-list {
    position: absolute;
    left: 0;
    right: 0;
    top: 18px;
    height: 35px;
    background: #fff;
    border: 1px solid #ddd;
    line-height: 15px;
}

.combo-list li {
    height: 15px;
}

.combo-list .current {
    background: #3399ff;
    color: #fff;
    outline: 1px dotted #c96a1a;
    outline-offset: -1px;
}

.dialog-actions {
    display: flex;
    justify-content: flex-end;
    gap: 8px;
    margin-top: 20px;
}

.dialog-actions button {
    width: 88px;
}

.grip {
    position: absolute;
    right: 2px;
    bottom: 2px;
}

/* outer scrollbars */
.scroll-v {
    grid-row: 1 / 3;
    grid-column: 2;
    display: flex;
    flex-direction: column;
    background: linear-gradient(90deg, #e3e3e3, #f4f4f4);
    padding: 0 1px;
}

.scroll-v .thumb {
    height: 79.5%;
    margin-bottom: auto;
    background: linear-gradient(90deg, #f5f5f5 45%, #c8c9ce);
    border: 1px solid #8f8f8f;
    border-radius: 2px;
}

.scroll-v > svg:last-child {
    margin-bottom: 14px;
}

.scroll-h {
    display: flex;
    background: linear-gradient(#e3e3e3, #f4f4f4);
}

.scroll-h .thumb {
    width: 93.2%;
    margin-right: auto;
    background: linear-gradient(#f5f5f5 45%, #c8c9ce);
    border: 1px solid #8f8f8f;
    border-radius: 2px;
}

.thumb {
    display: flex;
    align-items: center;
    justify-content: center;
}

.thumb i {
    width: 8px;
    height: 7px;
    background: repeating-linear-gradient(90deg, #555 0, #555 2px, transparent 2px, transparent 3px);
}

.scroll-v .thumb i {
    background: repeating-linear-gradient(#555 0, #555 2px, transparent 2px, transparent 3px);
}
```
